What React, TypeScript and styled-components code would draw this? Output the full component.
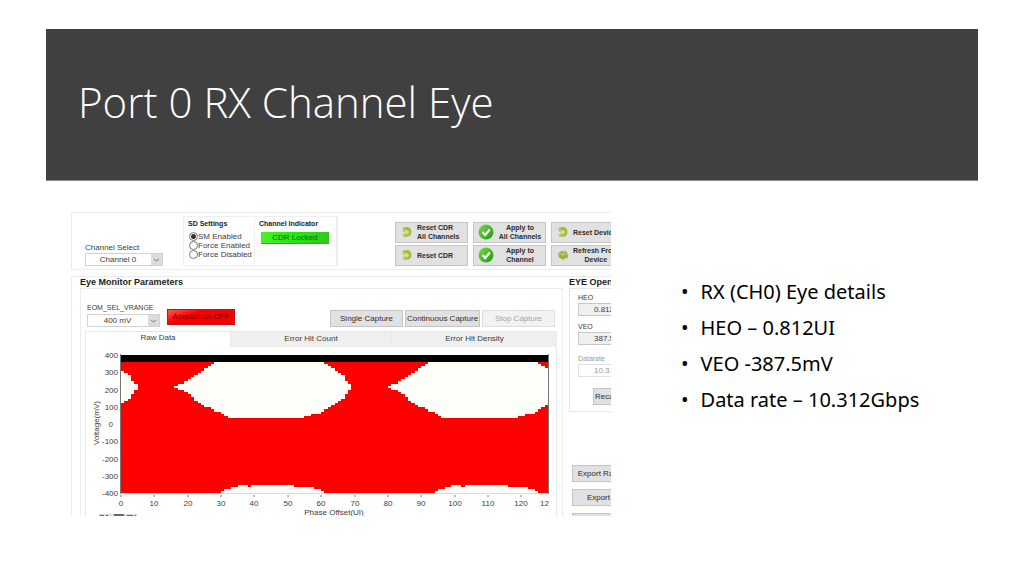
import React from "react";
import styled, { createGlobalStyle } from "styled-components";

const GlobalStyle = createGlobalStyle`
  *, *::before, *::after { box-sizing: border-box; }
  body { margin: 0; background: #fff; color: #000; font-family: Lato, sans-serif; }
  button, select, input { font: inherit; color: inherit; margin: 0; }
`;

/* ---------- slide ---------- */

const Slide = styled.main`
  padding-top: 29px;
`;

const Banner = styled.header`
  margin: 0 46px;
  padding: 0 32px 6px;
  height: 152px;
  display: flex;
  align-items: center;
  background: #404040;
  border-bottom: 1px solid #8c8c8c;
`;

const Title = styled.h1`
  margin: 0;
  font-family: "Open Sans", sans-serif;
  font-weight: 300;
  font-size: 42px;
  line-height: 56px;
  color: #fff;
`;

const Body = styled.div`
  display: grid;
  grid-template-columns: minmax(0, 540fr) minmax(0, 297fr);
  column-gap: 70px;
  padding: 31px 46px 0 71px;
`;

const Details = styled.ul`
  list-style: none;
  margin: 0;
  padding: 62px 0 0;
  font-family: "Noto Sans", sans-serif;
  font-size: 20px;
  line-height: 36px;
`;

const Detail = styled.li`
  display: flex;
  gap: 12px;
  white-space: nowrap;
  &::before { content: "•"; }
`;

/* ---------- eye monitor panel ---------- */

const Monitor = styled.section`
  height: 304px;
  overflow: hidden;
  font-family: "Liberation Sans", Arial, sans-serif;
  font-size: 8px;
  line-height: 10px;
  color: #3c3c3c;
  white-space: nowrap;
`;

const TopBar = styled.div`
  display: flex;
  width: 640px;
  height: 58px;
  border: 1px solid #ededed;
  margin-bottom: 6px;
`;

const ChannelField = styled.label`
  display: flex;
  flex-direction: column;
  justify-content: flex-end;
  width: 111px;
  padding: 0 19px 3px 13px;
`;

const SelectBox = styled.span<{ $width: number }>`
  position: relative;
  display: block;
  width: ${(p) => p.$width}px;
  height: 13px;
  border: 1px solid #d2d2d2;
  svg {
    position: absolute;
    top: 0;
    right: 0;
    width: 11px;
    height: 11px;
    background: #dcdcdc;
    pointer-events: none;
  }
`;

const Select = styled.select`
  display: block;
  appearance: none;
  width: 100%;
  height: 11px;
  padding: 0 12px 0 0;
  border: 0;
  border-radius: 0;
  background: #fff;
  text-align: center;
  text-align-last: center;
`;

const Settings = styled.div`
  display: flex;
  width: 155px;
  margin: 3px 57px 3px 0;
  border: 1px solid #f0f0f0;
`;

const SettingsGroup = styled.div<{ $width: number }>`
  width: ${(p) => p.$width}px;
  padding: 2px 0 0 4px;
  border-right: 1px solid #f0f0f0;
`;

const SmallHeading = styled.div`
  font-size: 7px;
  font-weight: 700;
  color: #222;
`;

const RadioRow = styled.label`
  display: flex;
  align-items: center;
  height: 9px;
  padding-left: 1px;
`;

const RadioList = styled.div`
  padding-top: 3px;
`;

const Radio = styled.input`
  appearance: none;
  width: 9px;
  height: 9px;
  border: 1px solid #777;
  border-radius: 50%;
  background: #fff;
  &:checked { background: radial-gradient(circle, #333 0 2px, #fff 3px); }
`;

const Lock = styled.div`
  margin: 3px 0 0 2px;
  width: 68px;
  height: 12px;
  line-height: 12px;
  text-align: center;
  color: #14600a;
  background: linear-gradient(90deg, #4af02a, #22e80c 50%, #30c81c);
  border-bottom: 1px solid #3aa52c;
`;

const Actions = styled.div`
  display: grid;
  grid-template-columns: repeat(3, 73px);
  grid-auto-rows: 21px;
  gap: 2px 5px;
  padding-top: 9px;
`;

const ActionButton = styled.button<{ $fill?: boolean; $align?: "left" | "center" }>`
  display: flex;
  align-items: center;
  gap: 3px;
  padding: 0 2px 1px 4px;
  border: 1px solid #c6c6c6;
  background: #e1e1e1;
  font-size: 7px;
  font-weight: 700;
  line-height: 9px;
  color: #2c2c2c;
  svg { flex: none; }
  span {
    flex: ${(p) => (p.$fill ? "1" : "none")};
    text-align: ${(p) => p.$align ?? "center"};
  }
`;

const Columns = styled.div`
  display: grid;
  grid-template-columns: 491px 142px;
  column-gap: 6px;
  width: 640px;
  border-left: 1px solid #ececec;
  border-top: 1px solid #ececec;
  height: 260px;
`;

const Heading = styled.h2`
  margin: 0;
  font-size: 9px;
  line-height: 11px;
  font-weight: 700;
  color: #1c1c1c;
`;

const Parameters = styled.div`
  padding-left: 8px;
`;

const ParameterFrame = styled.div`
  height: 260px;
  padding: 0 5px 0 4px;
  border: 1px solid #ececec;
`;

const ControlRow = styled.div`
  display: flex;
  align-items: flex-end;
  height: 38px;
  margin-bottom: 4px;
`;

const RangeField = styled.label`
  display: flex;
  flex-direction: column;
  gap: 1px;
  padding-left: 2px;
  margin-right: 7px;
  font-size: 7px;
  select { font-size: 8px; }
`;

const AcquisitionButton = styled.button`
  width: 68px;
  height: 16px;
  padding: 0;
  margin: 0 95px 2px 0;
  border: 1px solid #d01010;
  background: linear-gradient(160deg, #ff5a4a, #fb0000 35%, #f40000);
  color: #6c0000;
`;

const CaptureButtons = styled.div`
  display: flex;
  gap: 2px;
`;

const PlainButton = styled.button<{ $width: number }>`
  display: block;
  width: ${(p) => p.$width}px;
  height: 17px;
  padding: 0;
  border: 1px solid #c4c4c4;
  background: #e1e1e1;
  color: #2c2c2c;
  &:disabled { color: #a4a4a4; background: #f2f2f2; border-color: #dedede; }
`;

const Tabs = styled.div`
  display: grid;
  grid-template-columns: 145px 161px 166px;
  height: 15px;
`;

const Tab = styled.button<{ $active?: boolean }>`
  padding: 0;
  border: 0;
  border-top: 1px solid #e8e8e8;
  border-left: 1px solid #e8e8e8;
  background: ${(p) => (p.$active ? "#fff" : "#efefef")};
  padding-bottom: ${(p) => (p.$active ? 4 : 2)}px;
  line-height: 11px;
  text-align: center;
`;

const TabPanel = styled.div`
  border: 1px solid #e8e8e8;
  border-top: 0;
  height: 200px;
`;

const Chart = styled.svg`
  display: block;
  width: 470px;
  height: 173px;
  font-size: 8px;
  fill: #3c3c3c;
`;

const Tools = styled.svg`
  display: block;
  margin: -6px 0 0 13px;
`;

const OpeningFrame = styled.div`
  height: 124px;
  padding: 4px 0 0 8px;
  border: 1px solid #e6e6e6;
`;

const Reading = styled.label`
  display: block;
  height: 29px;
  font-size: 7px;
  &:nth-child(3) { padding-top: 3px; height: 37px; color: #999; }
`;

const ReadingInput = styled.input`
  display: block;
  width: 80px;
  height: 13px;
  padding: 0 0 0 15px;
  border: 1px solid #c8c8c8;
  background: #f0f0f0;
  font-size: 8px;
  &:disabled { background: #fff; border-color: #e2e2e2; color: #999; }
`;

const RecalculateSlot = styled.div`
  padding: 0 0 0 15px;
`;

const Exports = styled.div`
  display: grid;
  gap: 7px;
  padding: 53px 0 0 3px;
`;

/* ---------- icons ---------- */

const Chevron = () => (
  <svg viewBox="0 0 11 11" aria-hidden="true">
    <path d="M3 5l2.5 2L8 5" fill="none" stroke="#777" />
  </svg>
);

const RecycleIcon = () => (
  <svg width="14" height="14" viewBox="0 0 14 14" aria-hidden="true">
    <path d="M2.500 3Q6 1.500 8.500 2.200 11.500 3.500 11.500 7T8 11.600L4 12l-1.500-1.800L6.500 9.300Q9 9 8.800 6.800 8.500 5 6.500 5.200L4 5.800z" fill="#a3bd35" />
    <path d="M2.500 3l3 1.500-.2 3L2.800 6.800zM3 9l3.500-1.600v3L4 12z" fill="#bccd5c" />
    <path d="M6 6l2 .2-.5 2-1.500.3z" fill="#cfd9a0" />
  </svg>
);

const RefreshIcon = () => (
  <svg width="14" height="14" viewBox="0 0 14 14" aria-hidden="true">
    <path d="M1.500 5.500L6 2.500l1.500 1L9.500 2.500 12 6 8.500 7 7 6 4.500 7.200z" fill="#a9c043" />
    <path d="M2 6.500l3 .2 2 .8 2-1 3.500 0L11.500 10 8.500 10.500 7.500 12 3 9.500z" fill="#98b436" />
  </svg>
);

const CheckIcon = () => (
  <svg width="16" height="16" viewBox="0 0 16 16" aria-hidden="true">
    <defs>
      <linearGradient id="check" x1="0" y1="0" x2="1" y2="1">
        <stop offset="0" stopColor="#7ad84a" />
        <stop offset="1" stopColor="#1f9a12" />
      </linearGradient>
    </defs>
    <circle cx="8" cy="8" r="7.500" fill="url(#check)" />
    <path d="M4.500 8l2.700 3 4.500-5.500" fill="none" stroke="#fff" strokeWidth="2.200" />
  </svg>
);

/* ---------- eye diagram ---------- */

const PLOT = { left: 35, top: 9, right: 462, bottom: 147 };
const CELL_X = 427 / 128;
const CELL_Y = 138 / 64;
const PERIOD = 64;

// Opening of one eye: column, upper edge and lower edge, in plot pixels.
const EYE: [number, number, number][] = [
  [16, 31, 32], [20, 24, 40], [24, 15, 50], [28, 7, 56], [32, 7, 62],
  [54, 7, 62], [60, 8, 57], [62, 11, 53], [64, 16, 48], [66, 21, 43], [67, 26, 39], [68, 28, 36],
];
// Lower opening: column and upper edge; the lower edge is the axis.
const FOOT: [number, number][] = [
  [30, 136], [32, 134], [34, 131], [37, 129], [38, 131], [39, 129],
  [51, 129], [52, 131], [56, 132], [58, 134], [60, 136],
];

const lerp = (pts: number[][], x: number, k: number) => {
  for (let i = 1; i < pts.length; i++) {
    const a = pts[i - 1];
    const b = pts[i];
    if (x >= a[0] && x <= b[0]) return a[k] + ((b[k] - a[k]) * (x - a[0])) / (b[0] - a[0]);
  }
  return null;
};

const snap = (y: number) => 7 + Math.round((y - 7) / CELL_Y) * CELL_Y;

const openings = () => {
  const parts: string[] = [];
  const bar = (c: number, y1: number, y2: number) => {
    const x1 = Math.round(PLOT.left + c * CELL_X);
    const x2 = Math.round(PLOT.left + (c + 1) * CELL_X);
    parts.push(`M${x1} ${PLOT.top + y1}H${x2}V${PLOT.top + y2}H${x1}z`);
  };
  for (let c = 0; c < 128; c++) {
    for (const shift of [-PERIOD, 0, PERIOD]) {
      const top = lerp(EYE, c - shift, 1);
      const low = lerp(EYE, c - shift, 2);
      if (top !== null && low !== null) bar(c, snap(top), snap(Math.max(low, top + 2)));
      const foot = lerp(FOOT, c - shift, 1);
      if (foot !== null) bar(c, snap(foot), 138);
    }
  }
  return parts.join("");
};

const VOLTS = [400, 300, 200, 100, 0, -100, -200, -300, -400];
const PHASES = [0, 10, 20, 30, 40, 50, 60, 70, 80, 90, 100, 110, 120];

const EyeDiagram = () => (
  <Chart viewBox="0 0 470 173" role="img" aria-label="Eye diagram">
    <rect x={PLOT.left} y={PLOT.top} width="427" height="138" fill="#f00" />
    <path d={openings()} fill="#fffffa" shapeRendering="crispEdges" />
    <rect x={PLOT.left} y={PLOT.top} width="427" height="7" fill="#000" />
    <path d="M34.500 8v140M462.500 8v140" stroke="#777" />
    <path d="M35 147.500h427" stroke="#ddd" />
    {VOLTS.map((v, i) => (
      <text key={v} x={v === 0 ? 27 : 32} y={Math.round(12 + i * 17.25)} textAnchor="end">{v}</text>
    ))}
    {PHASES.map((p) => {
      const x = Math.round(PLOT.left + p * CELL_X);
      return (
        <g key={p}>
          <path d={`M${x} 149v2`} stroke="#777" />
          <text x={x} y="160" textAnchor="middle">{p}</text>
        </g>
      );
    })}
    <text x="463" y="160" textAnchor="end">12</text>
    <text x="248" y="169" textAnchor="middle">Phase Offset(UI)</text>
    <text transform="translate(13 77) rotate(-90)" textAnchor="middle">Voltage(mV)</text>
  </Chart>
);

/* ---------- page ---------- */

const details = ["RX (CH0) Eye details", "HEO – 0.812UI", "VEO -387.5mV", "Data rate – 10.312Gbps"];

export default function App() {
  return (
    <Slide>
      <GlobalStyle />
      <Banner><Title>Port 0 RX Channel Eye</Title></Banner>
      <Body>
        <Monitor>
          <TopBar>
            <ChannelField>
              Channel Select
              <SelectBox $width={78}><Select><option>Channel 0</option></Select><Chevron /></SelectBox>
            </ChannelField>
            <Settings>
              <SettingsGroup $width={71}>
                <SmallHeading>SD Settings</SmallHeading>
                <RadioList>
                  {["SM Enabled", "Force Enabled", "Force Disabled"].map((name, i) => (
                    <RadioRow key={name}><Radio type="radio" name="sd" defaultChecked={i === 0} />{name}</RadioRow>
                  ))}
                </RadioList>
              </SettingsGroup>
              <SettingsGroup $width={82}>
                <SmallHeading>Channel Indicator</SmallHeading>
                <Lock>CDR Locked</Lock>
              </SettingsGroup>
            </Settings>
            <Actions>
              <ActionButton $align="left"><RecycleIcon /><span>Reset CDR<br />All Channels</span></ActionButton>
              <ActionButton $fill><CheckIcon /><span>Apply to<br />All Channels</span></ActionButton>
              <ActionButton><RecycleIcon /><span>Reset Device</span></ActionButton>
              <ActionButton><RecycleIcon /><span>Reset CDR</span></ActionButton>
              <ActionButton $fill><CheckIcon /><span>Apply to<br />Channel</span></ActionButton>
              <ActionButton><RefreshIcon /><span>Refresh From<br />Device</span></ActionButton>
            </Actions>
          </TopBar>
          <Columns>
            <Parameters>
              <Heading>Eye Monitor Parameters</Heading>
              <ParameterFrame>
                <ControlRow>
                  <RangeField>
                    EOM_SEL_VRANGE
                    <SelectBox $width={73}><Select><option>400 mV</option></Select><Chevron /></SelectBox>
                  </RangeField>
                  <AcquisitionButton>Acquisition OFF</AcquisitionButton>
                  <CaptureButtons>
                    <PlainButton $width={73}>Single Capture</PlainButton>
                    <PlainButton $width={75}>Continuous Capture</PlainButton>
                    <PlainButton $width={73} disabled>Stop Capture</PlainButton>
                  </CaptureButtons>
                </ControlRow>
                <Tabs role="tablist">
                  <Tab role="tab" $active>Raw Data</Tab>
                  <Tab role="tab">Error Hit Count</Tab>
                  <Tab role="tab">Error Hit Density</Tab>
                </Tabs>
                <TabPanel>
                  <EyeDiagram />
                  <Tools width="40" height="6" viewBox="0 0 40 6" aria-hidden="true">
                    <path d="M0 1h38v4H0z" fill="#d8d8d8" />
                    <path d="M1 3h4M7 3h2M15 2h10M28 3h6M36 3h1" stroke="#666" strokeWidth="2" />
                    <path d="M13 4h7" stroke="#b5b52a" />
                  </Tools>
                </TabPanel>
              </ParameterFrame>
            </Parameters>
            <div>
              <Heading>EYE Opening</Heading>
              <OpeningFrame>
                <Reading>HEO<ReadingInput readOnly defaultValue="0.812" /></Reading>
                <Reading>VEO<ReadingInput readOnly defaultValue="387.5" /></Reading>
                <Reading>Datarate<ReadingInput disabled defaultValue="10.312" /></Reading>
                <RecalculateSlot><PlainButton $width={46}>Recalculate</PlainButton></RecalculateSlot>
              </OpeningFrame>
              <Exports>
                <PlainButton $width={72}>Export Raw Data</PlainButton>
                <PlainButton $width={72}>Export Data</PlainButton>
                <PlainButton $width={72}>Import</PlainButton>
              </Exports>
            </div>
          </Columns>
        </Monitor>
        <Details>
          {details.map((d) => <Detail key={d}>{d}</Detail>)}
        </Details>
      </Body>
    </Slide>
  );
}
